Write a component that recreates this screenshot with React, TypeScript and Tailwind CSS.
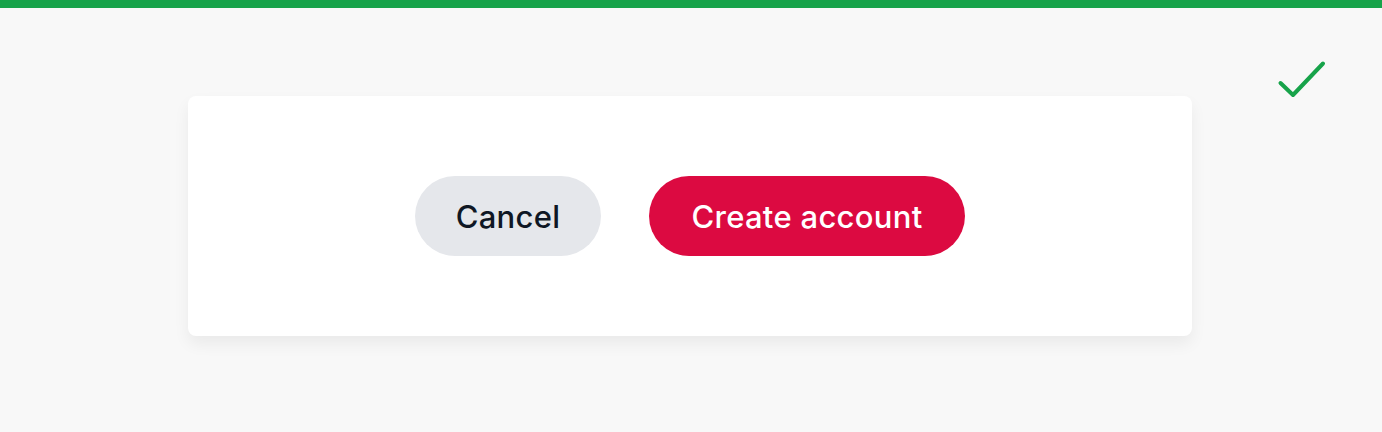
import React from "react";

export default function App() {
  return (
    <div className="relative min-h-screen w-full bg-[#f8f8f8]" style={{ fontFamily: "Inter, 'Noto Sans', sans-serif" }}>
      <div className="h-2 w-full bg-[#17a34a]" />
      <svg
        className="absolute left-[1276px] top-[58px]"
        width="52"
        height="42"
        viewBox="0 0 52 42"
        fill="none"
      >
        <path d="M4.5 25 L17 37 L47 5.5" stroke="#17a34a" strokeWidth="4" strokeLinecap="round" strokeLinejoin="round" />
      </svg>
      <div className="flex justify-center pt-[88px] pr-[2px]">
        <div className="flex h-[240px] w-[1004px] items-center justify-center gap-12 rounded-lg bg-white shadow-[0_8px_16px_rgba(0,0,0,0.06)]">
          <button className="h-20 w-[186px] rounded-full bg-[#e5e7eb] pt-[2px] text-[31px] font-medium tracking-[0.3px] text-[#0f1724]">
            Cancel
          </button>
          <button className="h-20 w-[316px] rounded-full bg-[#dc0a41] pt-[2px] text-[31px] font-medium tracking-[0.3px] text-white">
            Create account
          </button>
        </div>
      </div>
    </div>
  );
}
